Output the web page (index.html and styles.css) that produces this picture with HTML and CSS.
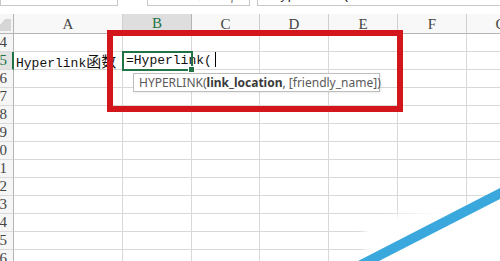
FILE: index.html
```html
<!DOCTYPE html>
<html lang="zh-CN">
<head>
    <meta charset="UTF-8">
    <title>Hyperlink函数</title>
    <link rel="stylesheet" href="styles.css">
</head>
<body>
    <div class="formula-bar">
        <div class="name-box"></div>
        <div class="fx-buttons">
            <span class="btn">✕</span>
            <span class="btn">✓</span>
            <span class="btn fx">fx</span>
        </div>
        <div class="formula-input"><span class="formula-text">Hyperlink(</span></div>
    </div>

    <div class="sheet">
        <div class="row head-row">
            <div class="rh corner"><span class="tri"></span></div>
            <div class="ch col-a">A</div>
            <div class="ch col-b active">B</div>
            <div class="ch col-c">C</div>
            <div class="ch col-d">D</div>
            <div class="ch col-e">E</div>
            <div class="ch col-f">F</div>
            <div class="ch col-g">G</div>
        </div>
        <div class="row">
            <div class="rh"><span>4</span></div>
            <div class="cell col-a"></div><div class="cell col-b"></div><div class="cell col-c"></div>
            <div class="cell col-d"></div><div class="cell col-e"></div><div class="cell col-f"></div><div class="cell col-g"></div>
        </div>
        <div class="row">
            <div class="rh active"><span>5</span></div>
            <div class="cell col-a"><span class="txt">Hyperlink<span class="cjk">函数</span></span></div>
            <div class="cell col-b selected">
                <span class="txt">=Hyperlink(<span class="caret"></span></span>
                <span class="handle"></span>
            </div>
            <div class="cell col-c"></div>
            <div class="cell col-d"></div><div class="cell col-e"></div><div class="cell col-f"></div><div class="cell col-g"></div>
        </div>
        <div class="row">
            <div class="rh"><span>6</span></div>
            <div class="cell col-a"></div><div class="cell col-b"></div><div class="cell col-c"></div>
            <div class="cell col-d"></div><div class="cell col-e"></div><div class="cell col-f"></div><div class="cell col-g"></div>
        </div>
        <div class="row">
            <div class="rh"><span>7</span></div>
            <div class="cell col-a"></div><div class="cell col-b"></div><div class="cell col-c"></div>
            <div class="cell col-d"></div><div class="cell col-e"></div><div class="cell col-f"></div><div class="cell col-g"></div>
        </div>
        <div class="row">
            <div class="rh"><span>8</span></div>
            <div class="cell col-a"></div><div class="cell col-b"></div><div class="cell col-c"></div>
            <div class="cell col-d"></div><div class="cell col-e"></div><div class="cell col-f"></div><div class="cell col-g"></div>
        </div>
        <div class="row">
            <div class="rh"><span>9</span></div>
            <div class="cell col-a"></div><div class="cell col-b"></div><div class="cell col-c"></div>
            <div class="cell col-d"></div><div class="cell col-e"></div><div class="cell col-f"></div><div class="cell col-g"></div>
        </div>
        <div class="row">
            <div class="rh"><span>10</span></div>
            <div class="cell col-a"></div><div class="cell col-b"></div><div class="cell col-c"></div>
            <div class="cell col-d"></div><div class="cell col-e"></div><div class="cell col-f"></div><div class="cell col-g"></div>
        </div>
        <div class="row">
            <div class="rh"><span>11</span></div>
            <div class="cell col-a"></div><div class="cell col-b"></div><div class="cell col-c"></div>
            <div class="cell col-d"></div><div class="cell col-e"></div><div class="cell col-f"></div><div class="cell col-g"></div>
        </div>
        <div class="row">
            <div class="rh"><span>12</span></div>
            <div class="cell col-a"></div><div class="cell col-b"></div><div class="cell col-c"></div>
            <div class="cell col-d"></div><div class="cell col-e"></div><div class="cell col-f"></div><div class="cell col-g"></div>
        </div>
        <div class="row">
            <div class="rh"><span>13</span></div>
            <div class="cell col-a"></div><div class="cell col-b"></div><div class="cell col-c"></div>
            <div class="cell col-d"></div><div class="cell col-e"></div><div class="cell col-f"></div><div class="cell col-g"></div>
        </div>
        <div class="row">
            <div class="rh"><span>14</span></div>
            <div class="cell col-a"></div><div class="cell col-b"></div><div class="cell col-c"></div>
            <div class="cell col-d"></div><div class="cell col-e"></div><div class="cell col-f"></div><div class="cell col-g"></div>
        </div>
        <div class="row">
            <div class="rh"><span>15</span></div>
            <div class="cell col-a"></div><div class="cell col-b"></div><div class="cell col-c"></div>
            <div class="cell col-d"></div><div class="cell col-e"></div><div class="cell col-f"></div><div class="cell col-g"></div>
        </div>
        <div class="row">
            <div class="rh"><span>16</span></div>
            <div class="cell col-a"></div><div class="cell col-b"></div><div class="cell col-c"></div>
            <div class="cell col-d"></div><div class="cell col-e"></div><div class="cell col-f"></div><div class="cell col-g"></div>
        </div>
    </div>

    <!-- annotation drawn over the sheet -->
    <div class="red-box"></div>
    <div class="tooltip">HYPERLINK(<b>link_location</b>, [friendly_name])</div>

    <svg class="watermark" width="500" height="261" viewBox="0 0 500 261">
        <defs>
            <filter id="soft"><feGaussianBlur stdDeviation="3"/></filter>
        </defs>
        <polygon points="366,270 364,226 400,214 470,204 510,186 510,270" fill="#fff" filter="url(#soft)"/>
        <polygon points="358,261 500,188 500,199 379,261" fill="#3aa8dc"/>
    </svg>
</body>
</html>
```

FILE: styles.css
```css
body {
    margin: 0;
    width: 500px;
    height: 261px;
    overflow: hidden;
    position: relative;
    background: #fff;
    font-family: "Liberation Serif", serif;
}
.formula-bar {
    display: flex;
    height: 14px;
    align-items: flex-start;
}
.name-box {
    width: 118px;
    height: 6px;
    border: 1px solid #c8c8c8;
    border-top: none;
    box-sizing: border-box;
}
.fx-buttons {
    margin-left: 29px;
    width: 103px;
    height: 6px;
    border: 1px solid #c8c8c8;
    border-top: none;
    box-sizing: border-box;
    display: flex;
    overflow: hidden;
    color: #777;
    font-family: "Liberation Sans", sans-serif;
    font-size: 13px;
}
.btn {
    margin-top: -11px;
    line-height: 14px;
}
.btn:nth-child(1) { margin-left: 5px; }
.btn:nth-child(2) { margin-left: 33px; }
.fx { margin-left: 25px; font-style: italic; font-family: "Liberation Serif", serif; }
.formula-input {
    margin-left: 7px;
    flex: 1;
    height: 6px;
    border: 1px solid #c8c8c8;
    border-top: none;
    border-right: none;
    box-sizing: border-box;
    overflow: hidden;
}
.formula-text {
    display: block;
    margin: -11px 0 0 14px;
    line-height: 14px;
    font-family: "Liberation Mono", monospace;
    font-size: 13px;
    color: #222;
}

.row {
    display: flex;
    height: 18px;
}
.head-row {
    height: 20px;
    margin-top: 0;
}
.rh {
    width: 14px;
    flex: none;
    box-sizing: border-box;
    border-right: 1px solid #b4b4b4;
    border-bottom: 1px solid #dadada;
    background: #f6f6f6;
    overflow: hidden;
    display: flex;
    justify-content: flex-end;
    align-items: center;
    font-size: 15px;
    color: #444;
    white-space: nowrap;
}
.rh span {
    padding-right: 6px;
}
.rh.active {
    background: #e2e2e2;
    border-right: 2px solid #217346;
    color: #217346;
}
.rh.active span {
    padding-right: 5px;
}
.corner {
    border-bottom: 1px solid #b4b4b4;
    align-items: flex-end;
    padding: 0 2px 2px 0;
}
.tri {
    width: 0;
    height: 0;
    border-left: 10px solid transparent;
    border-bottom: 12px solid #d6d6d6;
}
.col-a { width: 109px; }
.col-b { width: 69px; }
.col-c { width: 68px; }
.col-d { width: 69px; }
.col-e { width: 69px; }
.col-f { width: 69px; }
.col-g { width: 69px; }
.ch, .cell {
    flex: none;
    box-sizing: border-box;
    border-right: 1px solid #d8d8d8;
    border-bottom: 1px solid #d8d8d8;
}
.ch {
    background: #f8f8f8;
    border-right-color: #cfcfcf;
    border-bottom-color: #b4b4b4;
    display: flex;
    align-items: center;
    justify-content: center;
    padding-top: 1px;
    font-size: 15px;
    color: #444;
}
.ch.active {
    background: #dedede;
    color: #217346;
    border-bottom: 2px solid #217346;
    border-right-color: #b4b4b4;
}
.cell {
    background: #fff;
    white-space: nowrap;
}
.txt {
    display: block;
    padding-left: 2px;
    line-height: 18px;
    font-family: "Liberation Mono", "Noto Sans CJK SC", monospace;
    font-size: 13px;
    color: #111;
}
.cjk {
    font-family: "Noto Sans CJK SC", sans-serif;
    font-size: 15px;
}
.selected {
    position: relative;
    outline: 2px solid #217346;
    outline-offset: -1px;
}
.selected .txt {
    padding-left: 3px;
}
.caret {
    display: inline-block;
    width: 0;
    height: 15px;
    margin-left: 3px;
    vertical-align: -3px;
    border-left: 1px solid #000;
}
.handle {
    position: absolute;
    right: -4px;
    bottom: -4px;
    width: 5px;
    height: 5px;
    background: #217346;
    border: 1px solid #fff;
}

.red-box {
    position: absolute;
    left: 107px;
    top: 30px;
    width: 296px;
    height: 82px;
    box-sizing: border-box;
    border: 6px solid #d3161c;
}
.tooltip {
    position: absolute;
    left: 133px;
    top: 73px;
    width: 247px;
    height: 19px;
    box-sizing: border-box;
    border: 1px solid #bdbdbd;
    background: #fff;
    padding-left: 5px;
    line-height: 17px;
    font-family: "Noto Sans", sans-serif;
    font-size: 12px;
    color: #595959;
    white-space: nowrap;
    box-shadow: 1px 1px 2px rgba(0,0,0,0.08);
}
.tooltip b {
    color: #3a3a3a;
}
.watermark {
    position: absolute;
    left: 0;
    top: 0;
}
```
